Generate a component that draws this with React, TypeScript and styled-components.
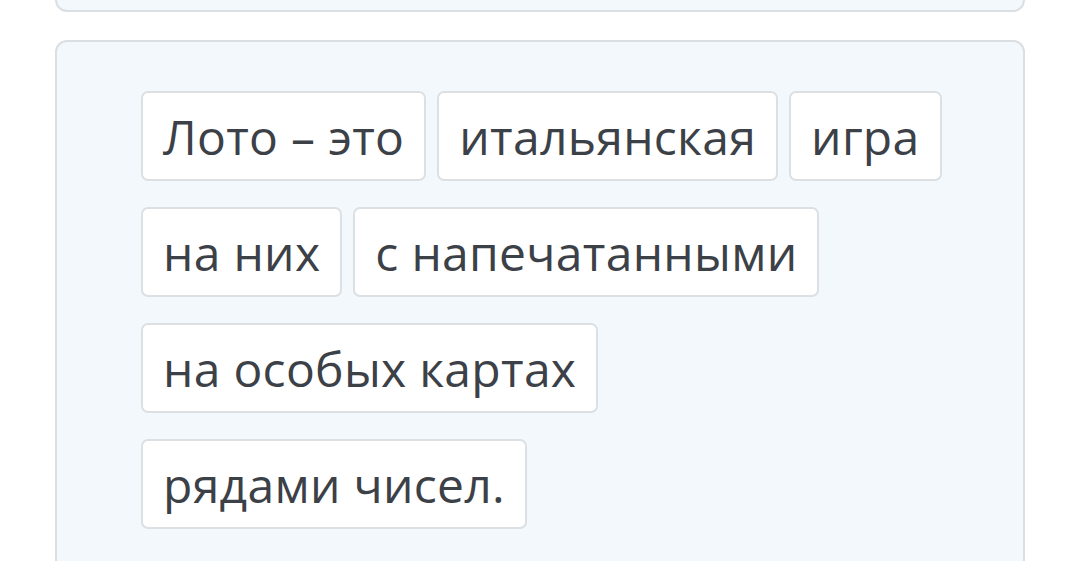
import styled, { createGlobalStyle } from "styled-components";

const GlobalStyle = createGlobalStyle`
body {
    margin: 0;
    background: #ffffff;
    font-family: "Open Sans", "Noto Sans", sans-serif;
    overflow: hidden;
}
`;

const Page = styled.div`
height: 621px;
box-sizing: border-box;
padding: 0 55px;
display: flex;
flex-direction: column;
gap: 28px;
margin-top: -60px;
`;

const Card = styled.div`
background: #f3f8fc;
border: 2px solid #dadfe3;
border-radius: 12px;
box-sizing: border-box;
`;

const TopCard = styled(Card)`
height: 72px;
flex-shrink: 0;
`;

const WordBank = styled(Card)`
flex: 1;
border-bottom: none;
border-radius: 12px 12px 0 0;
padding: 49px 60px 0 84px;
display: flex;
flex-wrap: wrap;
align-content: flex-start;
column-gap: 11px;
row-gap: 26px;
`;

const Word = styled.div`
height: 90px;
box-sizing: border-box;
padding: 0 20px;
display: flex;
align-items: center;
background: #ffffff;
border: 2px solid #dde0e3;
border-radius: 7px;
font-size: 48px;
letter-spacing: 0.3px;
color: #3c4047;
white-space: nowrap;
`;

const words = [
    "Лото – это",
    "итальянская",
    "игра",
    "на них",
    "с напечатанными",
    "на особых картах",
    "рядами чисел.",
];

export default function App() {
    return (
        <>
            <GlobalStyle />
            <Page>
                <TopCard />
                <WordBank>
                    {words.map((w, i) => (
                        <Word key={i}>{w}</Word>
                    ))}
                </WordBank>
            </Page>
        </>
    );
}
